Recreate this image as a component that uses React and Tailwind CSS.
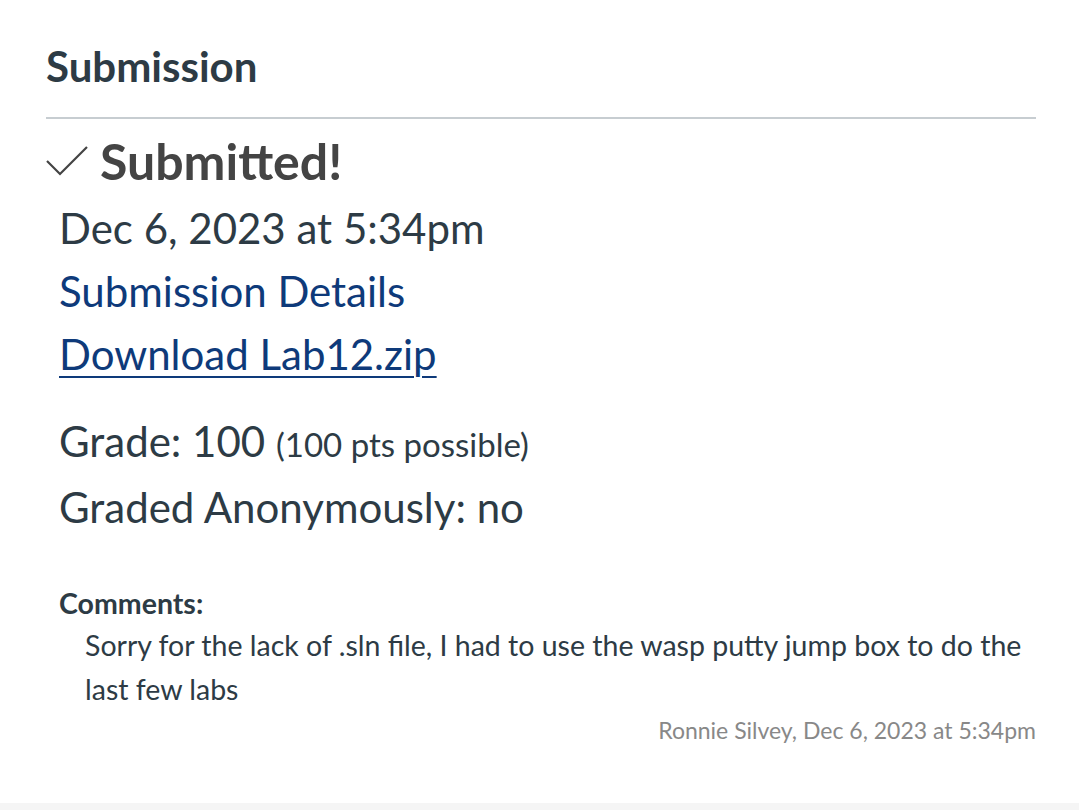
export default function App() {
  return (
    <div className="w-[1079px] h-[810px] bg-white flex flex-col overflow-hidden" style={{ fontFamily: 'Lato, "Noto Sans", sans-serif' }}>
      <div className="flex-1 pl-[46px] pr-[43px]">
        <h2 className="text-[42px] font-bold text-[#2d3b45] leading-none pt-[45px] pb-[30px] border-b-2 border-[#c7cdd1]">Submission</h2>
        <div className="flex items-center mt-[17px]">
          <svg width="42" height="32" viewBox="0 0 42 32" className="mr-[12px]" fill="none" stroke="#444" strokeWidth="2.2">
            <path d="M1 16 L14 29 L41 2" />
          </svg>
          <span className="text-[50px] font-bold text-[#444] leading-none">Submitted!</span>
        </div>
        <div className="pl-[13px] text-[42px] text-[#2d3b45] leading-[63px] mt-[11px]">
          <div>Dec 6, 2023 at 5:34pm</div>
          <div className="text-[#0e3a7a]">Submission Details</div>
          <div className="text-[#0e3a7a] underline decoration-2 underline-offset-[6px]">Download Lab12.zip</div>
          <div className="mt-[24px]">Grade: 100 <span className="text-[33px]">(100 pts possible)</span></div>
          <div>Graded Anonymously: no</div>
        </div>
        <div className="pl-[13px] mt-[50px]">
          <div className="text-[28.5px] font-bold text-[#2d3b45] leading-none">Comments:</div>
          <div className="pl-[26px] -mr-[4px] text-[28.5px] text-[#2d3b45] leading-[44px] mt-[5px]">Sorry for the lack of .sln file, I had to use the wasp putty jump box to do the last few labs</div>
          <div className="text-right text-[23px] text-[#888] leading-none mt-[8px]">Ronnie Silvey, Dec 6, 2023 at 5:34pm</div>
        </div>
      </div>
      <div className="h-[7px] bg-[#f5f5f5]" />
    </div>
  );
}
